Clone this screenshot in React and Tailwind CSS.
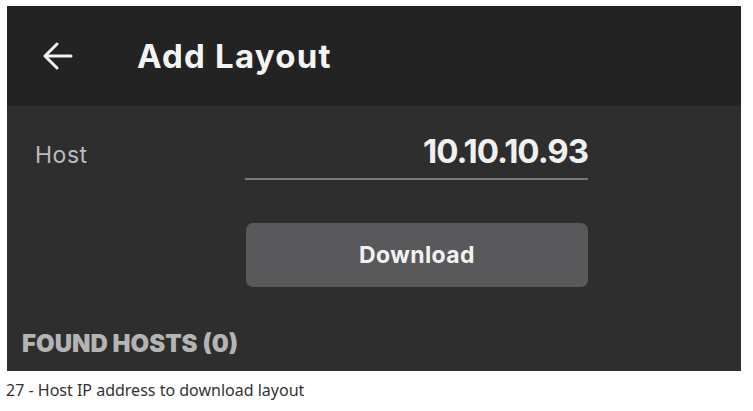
export default function App() {
  return (
    <div className="w-[753px] h-[411px] bg-white pt-[6px] pl-[7px] overflow-hidden">
      <div className="w-[734px] h-[365px] bg-[#2e2e2e] flex flex-col font-['Inter',sans-serif]">
        {/* Top bar */}
        <div className="h-[100px] bg-[#232323] flex items-center shrink-0">
          <svg className="ml-[36px]" width="30" height="28" viewBox="0 0 30 28" fill="none"
            stroke="#f2f2f2" strokeWidth="3" strokeLinecap="round" strokeLinejoin="round">
            <path d="M28 14H3" />
            <path d="M14 2 2 14l12 12" />
          </svg>
          <h1 className="ml-[64px] text-[33px] leading-[40px] font-bold tracking-[1.2px] text-[#f4f4f4]">
            Add Layout
          </h1>
        </div>

        <div className="pt-[25px]">
          <div className="flex items-baseline">
            <span className="ml-[28px] w-[210px] text-[23px] tracking-[0.5px] text-[#bcbcbc]">Host</span>
            <div className="w-[343px] border-b-2 border-[#7a7a7a] pb-[7px] text-right text-[33px] leading-[40px] font-bold tracking-[-1px] text-[#f0f0f0]">
              10.10.10.93
            </div>
          </div>

          <button className="ml-[239px] mt-[43px] w-[342px] h-[64px] rounded-[7px] bg-[#59595b] text-[23px] font-bold tracking-[0.4px] text-[#f2f2f2]">
            Download
          </button>

          <p className="ml-[15px] mt-[42px] text-[24px] leading-[30px] font-black text-[#b4b4b4]">
            FOUND HOSTS (0)
          </p>
        </div>
      </div>

      <p className="-ml-px mt-[7px] text-[16px] leading-[24px] text-[#333333] font-['Noto_Sans',sans-serif]">
        27 - Host IP address to download layout
      </p>
    </div>
  );
}
